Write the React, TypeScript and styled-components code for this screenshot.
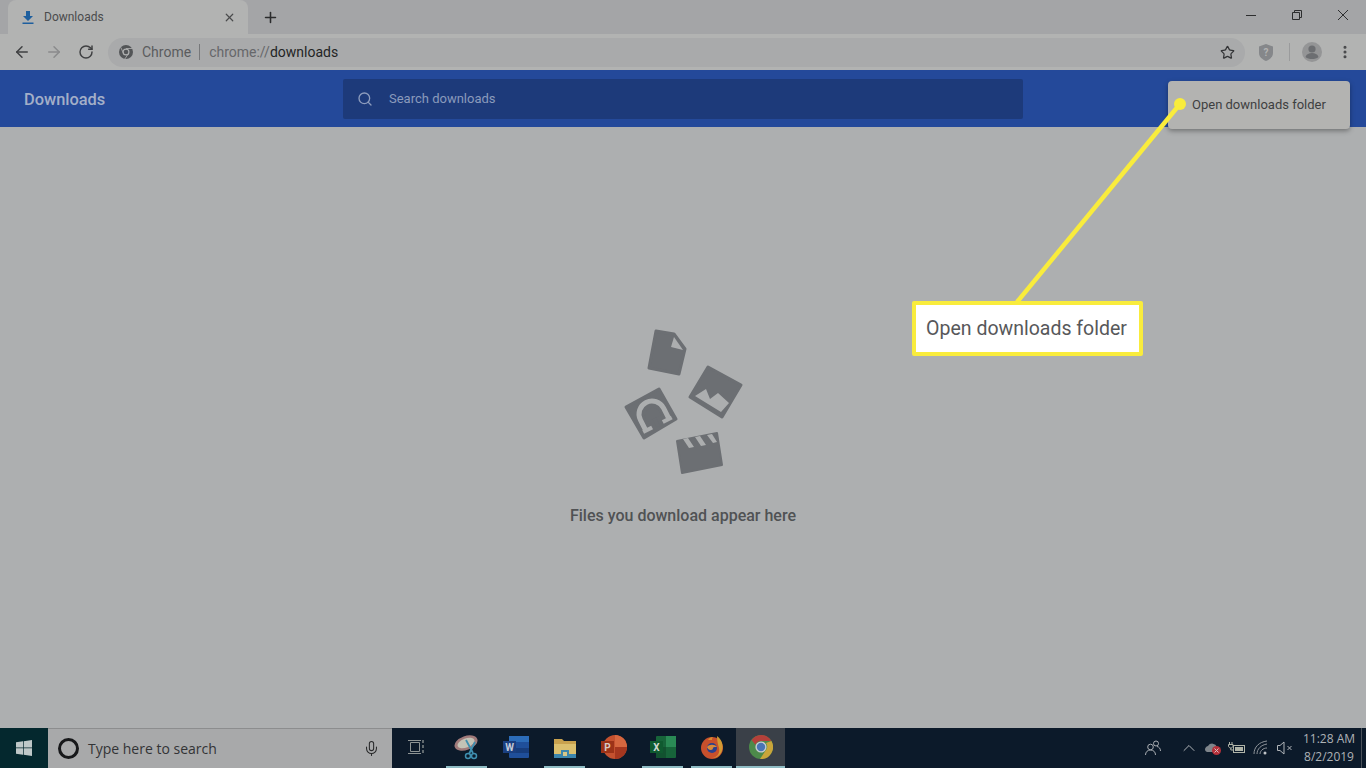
import React from "react";
import styled, { createGlobalStyle } from "styled-components";
import { ArrowLeft, ArrowRight, RotateCw, Star, Search, Plus, X, MoreVertical, Mic, ChevronUp } from "lucide-react";

const GlobalStyle = createGlobalStyle`
  html, body {
    margin: 0;
    padding: 0;
    background: #adafb0;
    font-family: Roboto, "Liberation Sans", sans-serif;
    overflow: hidden;
  }
`;

const TaskViewSvg = styled.svg`
  margin-right: 3px;
`;

function ChromeGlyph() {
  return (
    <svg width="14" height="14" viewBox="0 0 24 24">
      <circle cx="12" cy="12" r="12" fill="#535557" />
      <circle cx="12" cy="12" r="6" fill="#b0b1b1" />
      <circle cx="12" cy="12" r="4" fill="#535557" />
      <path d="M12 6h11M8 15 3 4M16 15l-6 9" stroke="#b0b1b1" strokeWidth="1.4" />
    </svg>
  );
}

function EmptyArt() {
  const dark = "#6c6f73";
  const light = "#acaeaf";
  return (
    <ArtSvg width="170" height="160" viewBox="0 0 170 160">
      <g stroke={dark} strokeWidth="3" strokeLinejoin="round" fill={dark}>
        <polygon points="56,11 74,14 85,29 79,54 49,48" />
        <polygon points="108,47 141,65 122,97 90,77" />
        <polygon points="26,87 59,69 76,99 44,118" />
      </g>
      <polygon points="74,17 83,30 71,27" fill={light} />
      <polygon points="95,76 106,69 110,79 118,73 129,83 121,92" fill={light} />
      <g transform="rotate(-27 52 94)">
        <path d="M39 106V94a13 13 0 0 1 26 0v12" fill="none" stroke={light} strokeWidth="5" />
        <path d="M44 96a8 8 0 0 1 16 0v3H44z" fill={dark} />
        <rect x="36" y="104" width="10" height="4" fill={light} />
        <rect x="58" y="104" width="10" height="4" fill={light} />
        <rect x="50" y="99" width="4" height="9" fill={dark} />
      </g>
      <polygon points="77,121 117,113 122,145 82,153" fill={dark} stroke={dark} strokeWidth="2" strokeLinejoin="round" />
      <g fill={light}>
        <polygon points="83,119 88,118 94,127 89,128" />
        <polygon points="95,117 100,116 106,125 101,126" />
        <polygon points="107,115 112,114 117,122 113,123" />
      </g>
    </ArtSvg>
  );
}

function WindowsLogo() {
  return (
    <svg width="16" height="16" viewBox="0 0 16 16" fill="#bfc8c8">
      <path d="M0 2.3 7 1.3V7.6H0zM7.7 1.2 16 0V7.6H7.7zM0 8.3H7V14.7L0 13.7zM7.7 8.3H16V16L7.7 14.8z" />
    </svg>
  );
}

const appIcons: { key: string; active?: boolean; hover?: boolean; art: React.ReactNode }[] = [
  {
    key: "task",
    art: (
      <TaskViewSvg width="16" height="16" viewBox="0 0 16 16" fill="none" stroke="#8e9494" strokeWidth="1">
        <path d="M2.500 3.500h9v9h-9zM0 1.500h13M0 14.500h13" />
        <path d="M15 1v3M15 6v3M15 11v3" strokeWidth="1.300" />
      </TaskViewSvg>
    ),
  },
  {
    key: "snip",
    active: true,
    art: (
      <svg width="26" height="26" viewBox="0 0 26 26">
        <ellipse cx="12" cy="9" rx="12" ry="7" fill="#a07a7a" transform="rotate(-20 12 9)" />
        <ellipse cx="12" cy="9" rx="9" ry="4.500" fill="#c4c3b6" transform="rotate(-20 12 9)" />
        <path d="M12 6 19 19M21 8 15 20" stroke="#3f8fb0" strokeWidth="1.800" />
        <circle cx="20" cy="22" r="2.500" fill="none" stroke="#3f8fb0" strokeWidth="1.500" />
        <circle cx="14" cy="22" r="2.500" fill="none" stroke="#3f8fb0" strokeWidth="1.500" />
      </svg>
    ),
  },
  {
    key: "word",
    art: (
      <svg width="26" height="24" viewBox="0 0 26 24">
        <rect x="6" y="1" width="20" height="22" rx="1" fill="#1f4f9a" />
        <rect x="6" y="1" width="20" height="6" fill="#2c6cb8" />
        <rect x="6" y="13" width="20" height="5" fill="#173d7c" />
        <rect x="0" y="6" width="13" height="12" fill="#1a3f80" />
        <text x="6.500" y="15.500" fontSize="10" fontWeight="700" textAnchor="middle" fill="#c5ccd8" fontFamily="Roboto">W</text>
      </svg>
    ),
  },
  {
    key: "files",
    active: true,
    art: (
      <svg width="24" height="22" viewBox="0 0 24 22">
        <path d="M1 3h8l2 2h12v17H1z" fill="#c9a24e" />
        <rect x="1" y="8" width="22" height="14" fill="#dcc06e" />
        <rect x="1" y="18" width="22" height="4" fill="#3d86ad" />
        <rect x="8" y="14" width="8" height="6" fill="#3d86ad" />
        <rect x="10" y="16" width="4" height="4" fill="#d8c88a" />
      </svg>
    ),
  },
  {
    key: "powerpoint",
    art: (
      <svg width="26" height="24" viewBox="0 0 26 24">
        <circle cx="14" cy="12" r="12" fill="#c4512f" />
        <path d="M14 0a12 12 0 0 1 12 12H14z" fill="#d6673f" />
        <path d="M14 12h12a12 12 0 0 1-12 12z" fill="#a5371f" />
        <rect x="0" y="6" width="13" height="12" fill="#9c3318" />
        <text x="6.500" y="15.500" fontSize="10" fontWeight="700" textAnchor="middle" fill="#d8cbc5" fontFamily="Roboto">P</text>
      </svg>
    ),
  },
  {
    key: "excel",
    active: true,
    art: (
      <svg width="26" height="24" viewBox="0 0 26 24">
        <rect x="6" y="1" width="20" height="22" rx="1" fill="#17643a" />
        <rect x="16" y="1" width="10" height="11" fill="#2a8a55" />
        <rect x="6" y="12" width="10" height="11" fill="#125230" />
        <rect x="0" y="6" width="13" height="12" fill="#0f5a30" />
        <text x="6.500" y="15.500" fontSize="10" fontWeight="700" textAnchor="middle" fill="#cfd8d0" fontFamily="Roboto">X</text>
      </svg>
    ),
  },
  {
    key: "firefox",
    active: true,
    art: (
      <svg width="24" height="24" viewBox="0 0 24 24">
        <circle cx="12" cy="13" r="11" fill="#c8502c" />
        <path d="M17 1c6 4 7 12 4 17-2 3-5 5-9 5 6-1 8-5 7-10-1-3-2-7-2-12z" fill="#d29a33" />
        <path d="M8 5c1-2 3-3 5-3-1 1-1 2-1 3z" fill="#d98a30" />
        <circle cx="12" cy="13" r="5" fill="#2a3f8c" />
        <path d="M7 12c2-3 8-3 10 0-2 0-5 0-4 2-2 2-5 1-6-2z" fill="#d9893a" />
      </svg>
    ),
  },
  {
    key: "chrome",
    active: true,
    hover: true,
    art: (
      <svg width="24" height="24" viewBox="0 0 24 24">
        <circle cx="12" cy="12" r="12" fill="#4d8a4a" />
        <path d="M12 0a12 12 0 0 1 10.400 6H12a6 6 0 0 0-5.600 3.800L2.600 5A12 12 0 0 1 12 0z" fill="#b5403a" />
        <path d="M22.400 6A12 12 0 0 1 11 24l5.300-8A6 6 0 0 0 17 8z" fill="#c9a53a" />
        <circle cx="12" cy="12" r="5.600" fill="#c9ccd0" />
        <circle cx="12" cy="12" r="4.200" fill="#4a74b4" />
      </svg>
    ),
  },
];

export default function App() {
  return (
    <Screen>
      <GlobalStyle />
      <TabStrip>
        <ActiveTab>
          <TabIcon>
            <svg width="12" height="13" viewBox="0 0 12 13" fill="#1e5f9e">
              <path d="M4 0h4v5h3L6 10 1 5h3zM0.500 11.400h11V13H.5z" />
            </svg>
          </TabIcon>
          <TabTitle>Downloads</TabTitle>
          <X size={13} strokeWidth={2.2} color="#4a4b4c" />
        </ActiveTab>
        <NewTab>
          <Plus size={17} strokeWidth={2.2} color="#2b2c2d" />
        </NewTab>
        <WindowControls>
          <WindowButton>
            <svg width="10" height="10" viewBox="0 0 10 10" stroke="#2d2e2f" fill="none">
              <path d="M0 5.500h10" />
            </svg>
          </WindowButton>
          <WindowButton>
            <svg width="10" height="10" viewBox="0 0 10 10" stroke="#2d2e2f" fill="none">
              <path d="M.5 2.500h7v7h-7zM2.500 2.500v-2h7v7h-2" />
            </svg>
          </WindowButton>
          <WindowButton>
            <svg width="10" height="10" viewBox="0 0 10 10" stroke="#2d2e2f" fill="none">
              <path d="M0 0l10 10M10 0 0 10" />
            </svg>
          </WindowButton>
        </WindowControls>
      </TabStrip>

      <Toolbar>
        <NavButton>
          <ArrowLeft size={18} strokeWidth={2} color="#3f4042" />
        </NavButton>
        <NavButton>
          <ArrowRight size={18} strokeWidth={2} color="#8a8b8c" />
        </NavButton>
        <NavButton>
          <RotateCw size={16} strokeWidth={2.2} color="#3f4042" />
        </NavButton>
        <Omnibox>
          <ChromeGlyph />
          <SiteChip>Chrome</SiteChip>
          <Divider />
          <UrlText>
            chrome://<b>downloads</b>
          </UrlText>
          <StarSlot>
            <Star size={15} strokeWidth={2} color="#333436" />
          </StarSlot>
        </Omnibox>
        <ToolGroup>
          <ShieldSlot>
            <svg width="16" height="17" viewBox="0 0 16 17">
              <path d="M1 2.500 8 0l7 2.500V9c0 4-3.500 6.500-7 8-3.500-1.500-7-4-7-8z" fill="#85878a" />
              <text x="8" y="12" textAnchor="middle" fontSize="10" fontWeight="700" fill="#b3b3b2" fontFamily="Roboto">?</text>
            </svg>
          </ShieldSlot>
          <ToolDivider />
          <Avatar>
            <svg width="20" height="20" viewBox="0 0 20 20" fill="#6c6e71">
              <circle cx="10" cy="7" r="3.600" />
              <path d="M3.500 15c1-3 3.500-4 6.500-4s5.500 1 6.500 4c-1.500 1.500-4 2-6.500 2s-5-.5-6.500-2z" />
            </svg>
          </Avatar>
          <MenuSlot>
            <MoreVertical size={16} strokeWidth={2.6} color="#47484a" />
          </MenuSlot>
        </ToolGroup>
      </Toolbar>

      <PageHeader>
        <PageTitle>Downloads</PageTitle>
        <SearchField>
          <Search size={16} strokeWidth={2} color="#8d9cbd" />
          <SearchHint>Search downloads</SearchHint>
        </SearchField>
      </PageHeader>

      <PageBody>
        <EmptyArt />
        <EmptyText>Files you download appear here</EmptyText>
      </PageBody>

      <Taskbar>
        <StartButton>
          <WindowsLogo />
        </StartButton>
        <TaskSearch>
          <CortanaRing />
          <TaskSearchText>Type here to search</TaskSearchText>
          <MicSlot>
            <Mic size={17} strokeWidth={1.5} color="#2a2b2c" />
          </MicSlot>
        </TaskSearch>
        <AppList>
          {appIcons.map((app) => (
            <AppItem key={app.key} $active={app.active} $hover={app.hover}>
              {app.art}
            </AppItem>
          ))}
        </AppList>
        <Tray>
          <TrayIcon $width={36}>
            <svg width="16" height="16" viewBox="0 0 16 16" fill="none" stroke="#a9adb2" strokeWidth="1">
              <circle cx="5.500" cy="7" r="2.800" />
              <path d="M.5 15c0-3 2-5 5-5s5 2 5 5" />
              <circle cx="11" cy="3.500" r="2.500" />
              <path d="M12 6.500c2 .3 3.500 2 3.500 4.500" />
            </svg>
          </TrayIcon>
          <TrayIcon $width={24} $gap={6}>
            <ChevronUp size={20} strokeWidth={1.2} color="#b0b4b8" />
          </TrayIcon>
          <TrayIcon $width={24}>
            <svg width="18" height="16" viewBox="0 0 18 16">
              <path d="M1 10a4 4 0 0 1 3-4 5 5 0 0 1 9 1 3 3 0 0 1 1 5H3a3 3 0 0 1-2-2z" fill="#7f858b" />
              <circle cx="12.500" cy="10.500" r="4.500" fill="#b5303a" />
              <path d="M10.500 8.500l4 4M14.500 8.500l-4 4" stroke="#d8c0c0" strokeWidth="1" />
            </svg>
          </TrayIcon>
          <TrayIcon $width={24}>
            <svg width="18" height="14" viewBox="0 0 18 14" fill="none" stroke="#b0b4a8" strokeWidth="1">
              <rect x="5.500" y="4.500" width="11" height="7" />
              <rect x="7" y="6" width="8" height="4" fill="#b0b4a8" stroke="none" />
              <path d="M1.500 1v2M4 1v2M.5 3.500h4.500V5c0 1-1 2-2.200 2S.5 6 .5 5zM2.800 7v2h2.500" />
            </svg>
          </TrayIcon>
          <TrayIcon $width={24}>
            <svg width="16" height="16" viewBox="0 0 16 16" fill="none" stroke="#8f949a" strokeWidth="1">
              <path d="M1 14C1 7 6 2 14 1M4 14c0-5 4-9 10-10M7 14c0-3 3-6 7-6" />
              <circle cx="12" cy="13" r="1.500" fill="#c0c4c8" stroke="none" />
            </svg>
          </TrayIcon>
          <TrayIcon $width={24}>
            <svg width="16" height="14" viewBox="0 0 16 14" fill="none" stroke="#b0b4b8" strokeWidth="1">
              <path d="M.5 4.500h2.500L7 1v12L3 9.500H.5zM10.500 5l4 4M14.500 5l-4 4" />
            </svg>
          </TrayIcon>
          <Clock>
            <span>11:28 AM</span>
            <span>8/2/2019</span>
          </Clock>
          <ShowDesktop />
        </Tray>
      </Taskbar>

      <DownloadsMenu>Open downloads folder</DownloadsMenu>
      <CalloutLine width="1366" height="768" viewBox="0 0 1366 768">
        <line x1="1180" y1="104" x2="1017" y2="302" stroke="#f9ec3c" strokeWidth="4.500" />
        <circle cx="1180" cy="104" r="6" fill="#f9ec3c" />
      </CalloutLine>
      <Callout>Open downloads folder</Callout>
    </Screen>
  );
}

const Screen = styled.div`
  position: relative;
  display: flex;
  flex-direction: column;
  width: 1366px;
  height: 768px;
  overflow: hidden;
`;

const TabStrip = styled.div`
  display: flex;
  align-items: flex-end;
  height: 34px;
  padding-left: 8px;
  background: #a4a5a7;
`;

const ActiveTab = styled.div`
  display: flex;
  align-items: center;
  box-sizing: border-box;
  width: 240px;
  height: 34px;
  padding: 0 12px 0 14px;
  background: #b2b3b2;
  border-radius: 8px 8px 0 0;
`;

const TabIcon = styled.span`
  display: flex;
  width: 22px;
`;

const TabTitle = styled.span`
  flex: 1;
  font-size: 12px;
  color: #4a4b4d;
`;

const NewTab = styled.div`
  display: flex;
  align-items: center;
  justify-content: center;
  width: 28px;
  height: 34px;
  margin-left: 8px;
`;

const WindowControls = styled.div`
  display: flex;
  margin-left: auto;
  align-self: flex-start;
`;

const WindowButton = styled.div`
  display: flex;
  align-items: center;
  justify-content: center;
  width: 46px;
  height: 30px;
`;

const Toolbar = styled.div`
  display: flex;
  align-items: center;
  box-sizing: border-box;
  height: 36px;
  padding: 0 0 0 6px;
  background: #b2b3b2;
`;

const NavButton = styled.div`
  display: flex;
  align-items: center;
  justify-content: center;
  width: 32px;
  height: 32px;
`;

const Omnibox = styled.div`
  display: flex;
  align-items: center;
  box-sizing: border-box;
  width: 1137px;
  height: 29px;
  margin-left: 6px;
  padding: 0 7px 0 11px;
  background: #a9aaab;
  border-radius: 15px;
`;

const SiteChip = styled.span`
  margin-left: 9px;
  font-size: 14px;
  color: #5b5c5e;
`;

const Divider = styled.span`
  width: 1px;
  height: 16px;
  margin: 0 9px 0 8px;
  background: #77787a;
`;

const UrlText = styled.span`
  font-size: 14px;
  color: #66676a;

  b {
    font-weight: 400;
    color: #232425;
  }
`;

const StarSlot = styled.span`
  display: flex;
  margin-left: auto;
  width: 21px;
  justify-content: center;
`;

const ToolGroup = styled.div`
  display: flex;
  align-items: center;
  flex: 1;
`;

const ShieldSlot = styled.span`
  display: flex;
  margin-left: 13px;
`;

const ToolDivider = styled.span`
  width: 1px;
  height: 18px;
  margin: 0 12px 0 15px;
  background: #9a9b9c;
`;

const Avatar = styled.span`
  display: flex;
  align-items: center;
  justify-content: center;
  width: 20px;
  height: 20px;
  background: #949596;
  border-radius: 50%;
`;

const MenuSlot = styled.span`
  display: flex;
  margin-left: 15px;
`;

const PageHeader = styled.header`
  display: flex;
  align-items: center;
  height: 57px;
  padding-left: 24px;
  background: #24499a;
`;

const PageTitle = styled.h1`
  width: 319px;
  margin: 0;
  padding-top: 2px;
  font-size: 16.400px;
  font-weight: 500;
  color: #a3afc8;
`;

const SearchField = styled.div`
  display: flex;
  align-items: center;
  box-sizing: border-box;
  width: 680px;
  height: 40px;
  padding-left: 14px;
  background: #1d3a7a;
  border-radius: 2px;
`;

const SearchHint = styled.span`
  margin-left: 16px;
  font-size: 13px;
  color: #8b9abc;
`;

const PageBody = styled.main`
  display: flex;
  flex: 1;
  flex-direction: column;
  align-items: center;
  padding-top: 193px;
  background: #adafb0;
`;

const ArtSvg = styled.svg`
  margin-left: 4px;
`;

const EmptyText = styled.p`
  margin: 26px 0 0;
  font-size: 16px;
  line-height: 20px;
  font-weight: 500;
  color: #505254;
`;

const Taskbar = styled.footer`
  display: flex;
  height: 40px;
  background: #0c1a2a;
`;

const StartButton = styled.div`
  display: flex;
  align-items: center;
  justify-content: center;
  width: 48px;
  background: #04282e;
`;

const TaskSearch = styled.div`
  display: flex;
  align-items: center;
  box-sizing: border-box;
  width: 344px;
  padding: 0 12px 0 10px;
  background: #a8a9aa;
  border-top: 1px solid #8c8d8e;
`;

const CortanaRing = styled.span`
  box-sizing: border-box;
  width: 21px;
  height: 21px;
  border: 3px solid #17181a;
  border-radius: 50%;
`;

const TaskSearchText = styled.span`
  margin-left: 9px;
  font-family: "Open Sans", sans-serif;
  font-size: 14px;
  color: #333436;
`;

const MicSlot = styled.span`
  display: flex;
  margin-left: auto;
`;

const AppList = styled.div`
  display: flex;
  padding-left: 1px;
`;

const AppItem = styled.div<{ $active?: boolean; $hover?: boolean }>`
  display: flex;
  align-items: center;
  justify-content: center;
  box-sizing: border-box;
  width: 49px;
  background: ${(props) => (props.$hover ? "#3a4048" : "transparent")};
  border-bottom: 2px solid transparent;
  border-image: ${(props) =>
    props.$active
      ? `linear-gradient(to right, transparent ${props.$hover ? "0" : "5px"}, #8fbcc4 ${props.$hover ? "0" : "5px"}, #8fbcc4 ${props.$hover ? "100%" : "44px"}, transparent ${props.$hover ? "100%" : "44px"}) 1`
      : "none"};
`;

const Tray = styled.div`
  display: flex;
  align-items: stretch;
  margin-left: auto;
`;

const TrayIcon = styled.div<{ $width: number; $gap?: number }>`
  display: flex;
  align-items: center;
  justify-content: center;
  width: ${(props) => props.$width}px;
  margin-left: ${(props) => props.$gap || 0}px;
`;

const Clock = styled.div`
  display: flex;
  flex-direction: column;
  align-items: center;
  justify-content: center;
  width: 64px;
  font-family: "Open Sans", sans-serif;
  font-size: 12px;
  line-height: 18px;
  color: #aeb2b6;
`;

const ShowDesktop = styled.div`
  width: 4px;
  border-left: 1px solid #4a515a;
`;

const DownloadsMenu = styled.div`
  position: absolute;
  top: 81px;
  left: 1168px;
  box-sizing: border-box;
  width: 182px;
  height: 48px;
  padding: 16px 0 0 24px;
  font-size: 13px;
  line-height: 15px;
  color: #3e3f41;
  background: #b3b3b1;
  border-radius: 4px;
  box-shadow: 0 2px 5px rgba(0, 0, 0, 0.35);
`;

const CalloutLine = styled.svg`
  position: absolute;
  top: 0;
  left: 0;
  pointer-events: none;
`;

const Callout = styled.div`
  position: absolute;
  top: 301px;
  left: 912px;
  display: flex;
  align-items: center;
  justify-content: center;
  box-sizing: border-box;
  width: 231px;
  height: 55px;
  padding-right: 2px;
  font-size: 19.500px;
  color: #57585a;
  background: #ffffff;
  border: 4px solid #f9ec3c;
  border-radius: 2px;
`;
